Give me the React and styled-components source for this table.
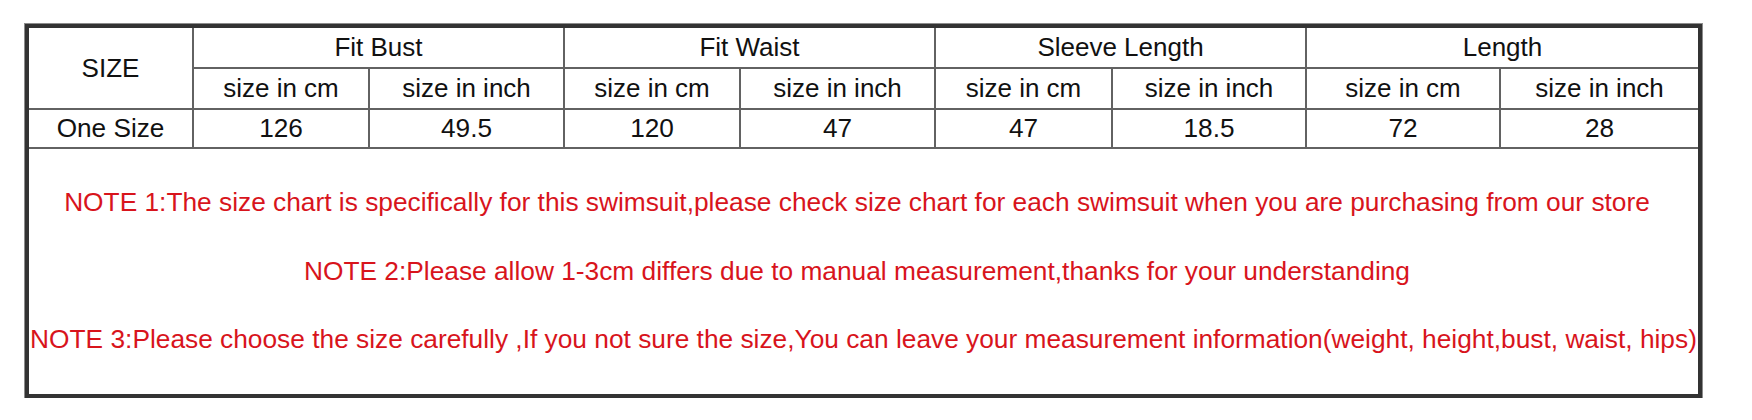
import React from "react";
import styled, { createGlobalStyle } from "styled-components";

const GlobalStyle = createGlobalStyle`
  html, body {
    margin: 0;
    padding: 0;
    background: #ffffff;
  }
  body {
    font-family: "Liberation Sans", Arial, sans-serif;
  }
`;

const Page = styled.div`
  padding: 24px 0 0 25px;
`;

const Chart = styled.div`
  width: 1669px;
  border: 4px solid #333333;
  box-shadow: 0 0 0 1px #8c8c8c;
  display: grid;
  grid-template-columns: 163px 174px 193px 174px 193px 175px 192px 192px 197px;
  grid-template-rows: 39px 39px 37px 245px;
  gap: 2px;
  background: #626262;
`;

const Cell = styled.div`
  background: #ffffff;
  display: flex;
  align-items: center;
  justify-content: center;
  color: #111111;
  font-size: ${(p) => (p.$body ? "26.2px" : "26px")};
  white-space: nowrap;
  grid-column: ${(p) => (p.$span ? `span ${p.$span}` : "auto")};
  grid-row: ${(p) => (p.$rows ? `span ${p.$rows}` : "auto")};
`;

const Notes = styled.div`
  grid-column: 1 / -1;
  background: #ffffff;
  padding-top: 19px;
  display: flex;
  flex-direction: column;
  align-items: center;
`;

const Note = styled.div`
  color: #d8141c;
  font-size: 26.3px;
  line-height: 68.5px;
  white-space: nowrap;
  text-align: center;
  padding-right: ${(p) => (p.$offset ? "13px" : "0")};
`;

const groups = ["Fit Bust", "Fit Waist", "Sleeve Length", "Length"];
const values = ["126", "49.5", "120", "47", "47", "18.5", "72", "28"];
const notes = [
  {
    text: "NOTE 1:The size chart is specifically for this swimsuit,please check size chart for each swimsuit when you are purchasing from our store",
    offset: true,
  },
  {
    text: "NOTE 2:Please allow 1-3cm differs due to manual measurement,thanks for your understanding",
    offset: true,
  },
  {
    text: "NOTE 3:Please choose the size carefully ,If you not sure the size,You can leave your measurement information(weight, height,bust, waist, hips)",
    offset: false,
  },
];

export default function App() {
  return (
    <>
      <GlobalStyle />
      <Page>
        <Chart>
          <Cell $rows={2}>SIZE</Cell>
          {groups.map((g) => (
            <Cell key={g} $span={2}>
              {g}
            </Cell>
          ))}
          {groups.map((g) => (
            <React.Fragment key={g}>
              <Cell>size in cm</Cell>
              <Cell>size in inch</Cell>
            </React.Fragment>
          ))}
          <Cell $body>One Size</Cell>
          {values.map((v, i) => (
            <Cell key={i} $body>
              {v}
            </Cell>
          ))}
          <Notes>
            {notes.map((n) => (
              <Note key={n.text} $offset={n.offset}>
                {n.text}
              </Note>
            ))}
          </Notes>
        </Chart>
      </Page>
    </>
  );
}
